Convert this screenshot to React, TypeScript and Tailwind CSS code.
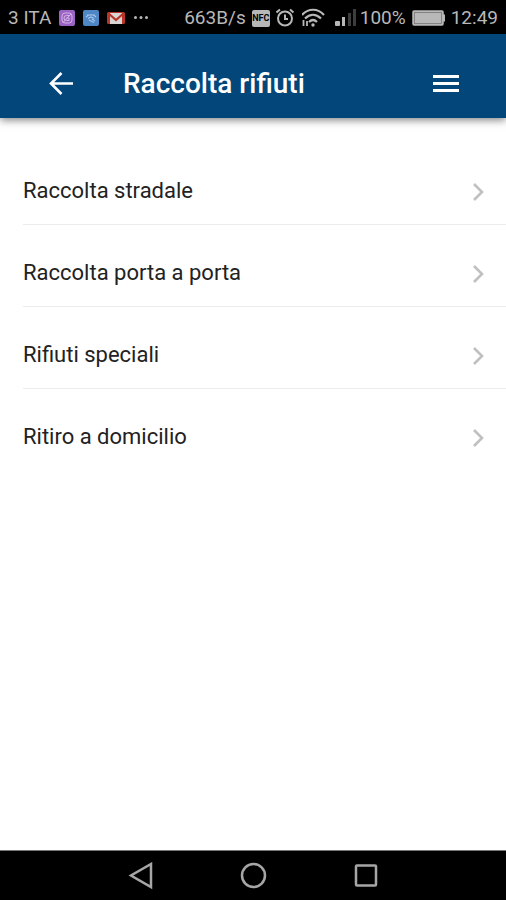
import type { ReactNode } from "react";

const items = [
  "Raccolta stradale",
  "Raccolta porta a porta",
  "Rifiuti speciali",
  "Ritiro a domicilio",
];

function StatusBar() {
  return (
    <div className="flex h-[34px] items-center justify-between bg-black px-2 pt-0.5 text-[19px] leading-6 text-[#b8b8b8]">
      {/* Carrier and notifications */}
      <div className="flex items-center gap-2">
        <span className="whitespace-nowrap">3 ITA</span>
        <svg className="size-4" viewBox="0 0 16 16" fill="none" aria-hidden="true">
          <rect width="16" height="16" rx="2" fill="#9a63c4" />
          <rect x="3" y="3" width="10" height="10" rx="3" stroke="#d3b3e6" />
          <path d="M11 5.5H7.5a2.5 2.5 0 0 0 0 5H10V8H7.5M4.5 12 12 4" stroke="#d3b3e6" />
        </svg>
        <svg className="size-4" viewBox="0 0 16 16" fill="none" aria-hidden="true">
          <rect width="16" height="16" rx="2" fill="#4f86c6" />
          <path d="M3 7c2.5-3 7.5-3 10 0M4 5h8M5 8.5l3-1.5 3 1.5M6 10l2 1 3 1.5M9 9l3 2" stroke="#a3c4e8" strokeWidth="1.2" />
        </svg>
        <svg className="h-4 w-[18px]" viewBox="0 0 18 16" aria-hidden="true">
          <rect x="0" y="2" width="18" height="12" rx="1.5" fill="#b8352c" />
          <path d="M3 3h12v11H3z" fill="#d9d5d3" />
          <path d="M1 3l8 7 8-7" fill="none" stroke="#b8352c" strokeWidth="2.2" />
        </svg>
        <svg className="size-4" viewBox="0 0 16 16" fill="#b8b8b8" aria-hidden="true">
          <circle cx="2.5" cy="7.5" r="1.5" />
          <circle cx="8" cy="7.5" r="1.5" />
          <circle cx="13.5" cy="7.5" r="1.5" />
        </svg>
      </div>

      {/* Network, battery and clock */}
      <div className="flex items-center gap-[6px]">
        <span className="whitespace-nowrap">663B/s</span>
        <span className="flex h-[17px] w-[18px] items-center justify-center rounded-xs bg-[#b8b8b8] text-[9px] leading-none font-bold text-black">
          NFC
        </span>
        <svg className="size-5" viewBox="0 0 20 20" fill="none" stroke="#b8b8b8" strokeWidth="2" aria-hidden="true">
          <circle cx="9" cy="10.5" r="7" />
          <path d="M9 6.5V11h3M.5 4.5 4 1.5M17.5 4.5 14 1.5" />
        </svg>
        <svg className="h-5 w-[26px]" viewBox="0 0 26 20" fill="none" stroke="#b8b8b8" strokeWidth="2.2" aria-hidden="true">
          <path d="M0 7C6 0 16 0 22 7M3 10.5C8 5.5 14 5.5 19 10.5M7 14c2.5-2.5 5.5-2.5 8 0" />
          <circle cx="11" cy="17" r="1.7" fill="#b8b8b8" stroke="none" />
          <path d="M1.5 12v6M5 13v5" strokeWidth="1.8" />
        </svg>
        <svg className="h-5 w-6" viewBox="0 0 24 20" aria-hidden="true">
          <rect x="1" y="13" width="5" height="5" rx="1" fill="#b8b8b8" />
          <rect x="8" y="9" width="3" height="9" fill="#b8b8b8" />
          <rect x="14" y="5" width="3" height="13" fill="#3d3d3d" />
          <rect x="19" y="1" width="3" height="17" fill="#3d3d3d" />
        </svg>
        <span className="-ml-1">100%</span>
        <svg className="h-4 w-[33px]" viewBox="0 0 33 16" aria-hidden="true">
          <rect x="1" y="1" width="30" height="14" rx="1" fill="#b8b8b8" stroke="#b8b8b8" strokeWidth="1.5" />
          <rect x="2.5" y="2.5" width="27" height="11" fill="none" stroke="#777" strokeWidth=".8" />
          <rect x="31" y="4.5" width="2" height="7" fill="#b8b8b8" />
        </svg>
        <span>12:49</span>
      </div>
    </div>
  );
}

function AppBar() {
  return (
    <header className="z-10 flex h-[84px] items-center bg-[#02467a] px-[46px] pt-4 text-white shadow-[0_2px_8px_rgba(0,0,0,0.5)]">
      <button type="button" aria-label="Indietro" className="size-[30px]">
        <svg viewBox="0 0 30 30" fill="none" stroke="currentColor" strokeWidth="2.6">
          <path d="M27 14.5H5M15.5 4 5 14.5 15.5 25" />
        </svg>
      </button>
      <h1 className="ml-[47px] flex-1 text-[28px] leading-8 font-medium">Raccolta rifiuti</h1>
      <button type="button" aria-label="Menu" className="h-[30px] w-7">
        <svg viewBox="0 0 28 30" fill="currentColor">
          <path d="M1 6h26v3H1zM1 13h26v3H1zM1 20h26v3H1z" />
        </svg>
      </button>
    </header>
  );
}

function ListItem({ label, last }: { label: string; last: boolean }) {
  return (
    <li className={last ? "" : "border-b border-[#ececec]"}>
      <a href="#" className="flex h-[81px] items-center justify-between pt-3.5 pr-5 text-[22px] leading-7 text-[#222]">
        {label}
        <svg className="h-5 w-4" viewBox="0 0 16 20" fill="none" stroke="#c0c0c0" strokeWidth="2.6" aria-hidden="true">
          <path d="M4 3l8 8-8 8" />
        </svg>
      </a>
    </li>
  );
}

function NavButton({ label, children }: { label: string; children: ReactNode }) {
  return (
    <button type="button" aria-label={label} className="size-7">
      <svg viewBox="0 0 28 28" fill="none" stroke="#a6a6a6" strokeWidth="2.5">
        {children}
      </svg>
    </button>
  );
}

export default function App() {
  return (
    <div className="flex min-h-screen flex-col bg-white font-['Roboto',sans-serif]">
      <StatusBar />
      <AppBar />
      <main className="flex-1 pt-[25px] pl-[23px]">
        <ul>
          {items.map((item, index) => (
            <ListItem key={item} label={item} last={index === items.length - 1} />
          ))}
        </ul>
      </main>

      {/* Android navigation buttons */}
      <nav className="flex h-[50px] items-center justify-center gap-[85px] border-t border-[#777] bg-black">
        <NavButton label="Indietro">
          <path d="M25 2v23L5 13.5z" />
        </NavButton>
        <NavButton label="Home">
          <circle cx="14.5" cy="13.5" r="11.5" />
        </NavButton>
        <NavButton label="Recenti">
          <rect x="4" y="3.5" width="20" height="20" rx="1" />
        </NavButton>
      </nav>
    </div>
  );
}
